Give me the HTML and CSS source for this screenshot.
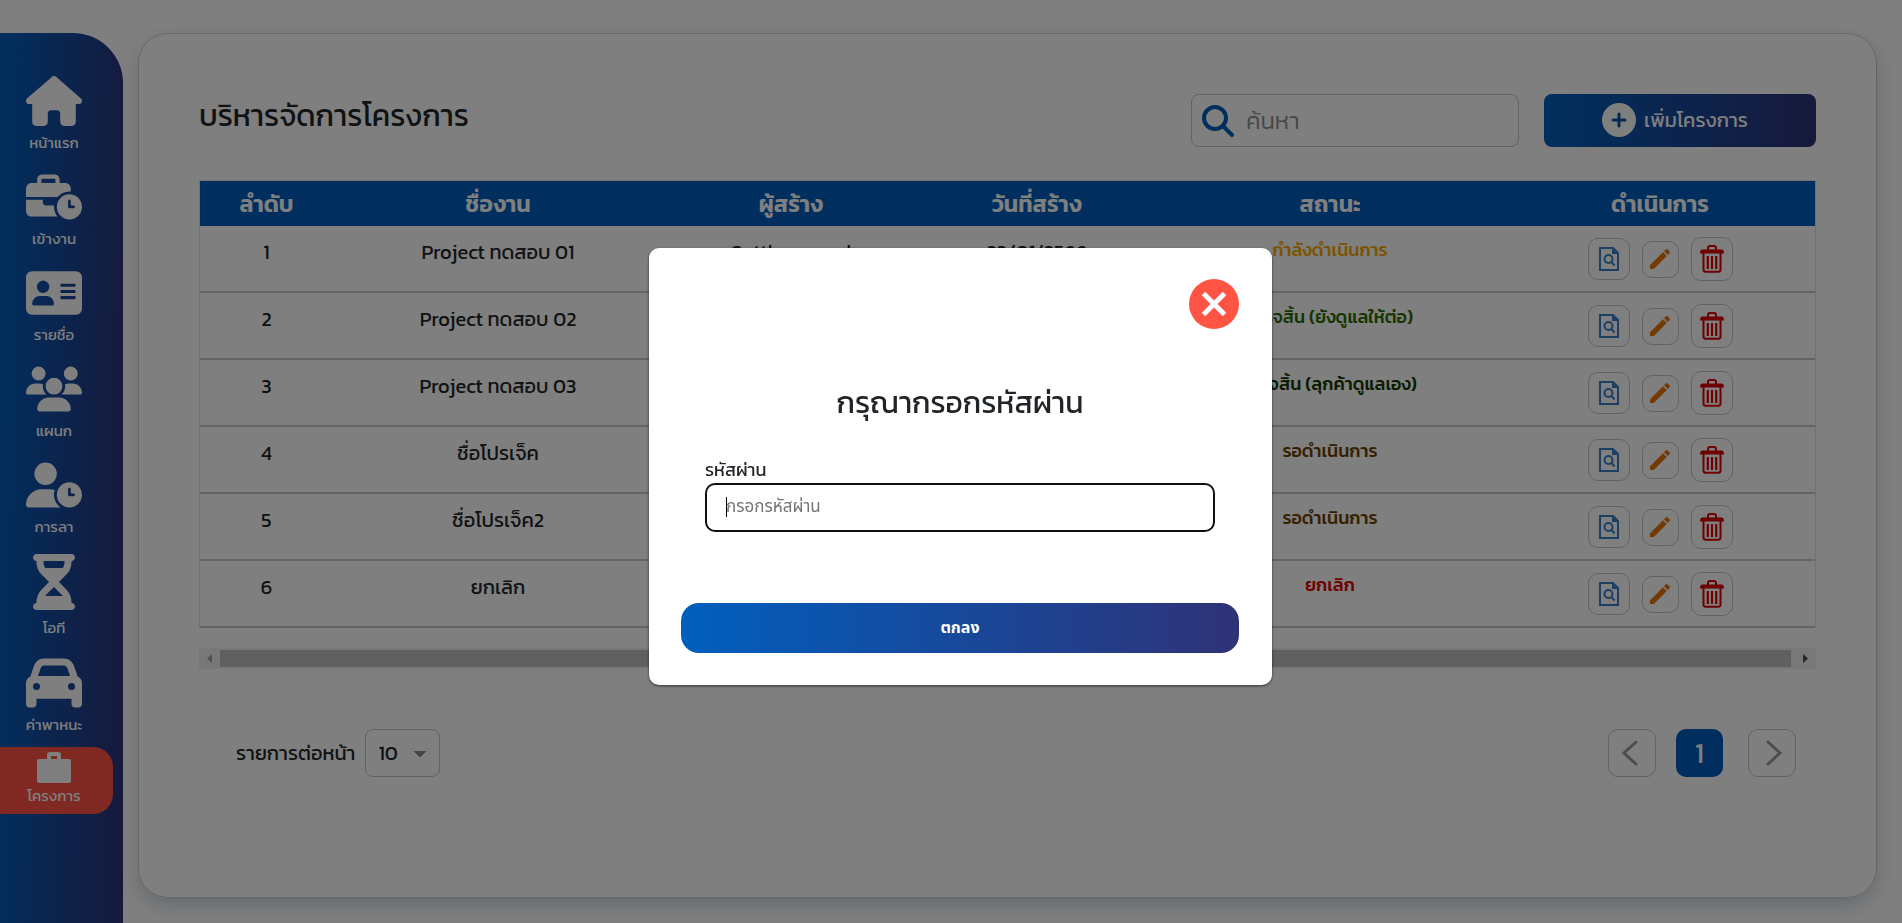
FILE: index.html
```html
<!DOCTYPE html>
<html lang="th">
<head>
<meta charset="utf-8">
<title>บริหารจัดการโครงการ</title>
<link rel="stylesheet" href="styles.css">
</head>
<body>
<svg class="sprite" aria-hidden="true">
  <symbol id="i-view" viewBox="0 0 20 24"><path d="M1 1h13l5 5v17H1z" fill="none" stroke="#3a80c4" stroke-width="2"/><path d="M13 1v6h6z" fill="#3a80c4"/><circle cx="9.500" cy="12" r="4" fill="none" stroke="#3a80c4" stroke-width="2"/><path d="M12.500 15l3 3.500" stroke="#3a80c4" stroke-width="2"/></symbol>
  <symbol id="i-edit" viewBox="0 0 20 20"><path d="M0 20v-3.800L13 3.200 16.800 7 3.800 20zM14 2.200 15.700.6q1-1 2 0l1.700 1.700q1 1 0 2L17.800 6z" fill="#e87408"/></symbol>
  <symbol id="i-trash" viewBox="0 0 24 28"><path d="M8 5V3q0-2 2-2h4q2 0 2 2v2M3.500 8v16.500q0 2.300 2.300 2.300h12.400q2.300 0 2.300-2.300V8" fill="none" stroke="#dc0000" stroke-width="2"/><path d="M0 8.500Q0 4.500 2.500 4.500h19Q24 4.500 24 8.500z" fill="#dc0000"/><path d="M7.800 11v13M12 11v13M16.200 11v13" stroke="#dc0000" stroke-width="2.200"/></symbol>
</svg>

<nav class="sidebar" aria-label="เมนูหลัก">
  <a class="nav-item" href="#"><svg viewBox="0 0 576 512" class="nav-icon"><path d="M575.8 255.500c0 18-15 32.100-32 32.100h-32l.7 160.200c0 2.700-.2 5.400-.5 8.100V472c0 22.100-17.900 40-40 40H392c-22.100 0-40-17.900-40-40v-88c0-17.700-14.300-32-32-32h-64c-17.700 0-32 14.300-32 32v88c0 22.100-17.900 40-40 40h-80c-22.100 0-40-17.900-40-40V287.600H32c-18 0-32-14-32-32.100 0-9 3-17 10-24L266.400 8c7-7 15-8 22-8s15 2 21 7l255.400 224.500c8 7 12 15 11 24z"/></svg><span>หน้าแรก</span></a>
  <a class="nav-item" href="#"><svg viewBox="0 0 640 512" class="nav-icon"><path d="M184 48h144c4.400 0 8 3.600 8 8v40H176V56c0-4.400 3.600-8 8-8zm-56 8v40H64C28.700 96 0 124.700 0 160v96h360.200c32.300-39.100 81.100-64 135.800-64 5.400 0 10.700.2 16 .7V160c0-35.300-28.700-64-64-64h-64V56c0-30.900-25.100-56-56-56H184c-30.900 0-56 25.100-56 56zm192.700 296H224c-17.700 0-32-14.300-32-32v-32H0v128c0 35.300 28.700 64 64 64h296.200C335.100 449.600 320 410.500 320 368c0-5.400.2-10.700.7-16zM640 368a144 144 0 1 0-288 0 144 144 0 1 0 288 0zM496 288c8.800 0 16 7.200 16 16v48h32c8.800 0 16 7.200 16 16s-7.200 16-16 16h-48c-8.800 0-16-7.200-16-16v-64c0-8.800 7.200-16 16-16z"/></svg><span>เข้างาน</span></a>
  <a class="nav-item" href="#"><svg viewBox="0 0 576 512" class="nav-icon"><path d="M64 32C28.700 32 0 60.700 0 96v320c0 35.300 28.700 64 64 64h448c35.300 0 64-28.700 64-64V96c0-35.300-28.700-64-64-64H64zm80 256h64c44.200 0 80 35.800 80 80 0 8.800-7.200 16-16 16H80c-8.800 0-16-7.200-16-16 0-44.200 35.800-80 80-80zm-32-96a64 64 0 1 1 128 0 64 64 0 1 1-128 0zm256-32h128c8.800 0 16 7.200 16 16s-7.200 16-16 16H368c-8.800 0-16-7.200-16-16s7.200-16 16-16zm0 64h128c8.800 0 16 7.200 16 16s-7.200 16-16 16H368c-8.800 0-16-7.200-16-16s7.200-16 16-16zm0 64h128c8.800 0 16 7.200 16 16s-7.200 16-16 16H368c-8.800 0-16-7.200-16-16s7.200-16 16-16z"/></svg><span>รายชื่อ</span></a>
  <a class="nav-item" href="#"><svg viewBox="0 0 640 512" class="nav-icon"><path d="M144 0a80 80 0 1 1 0 160A80 80 0 1 1 144 0zM512 0a80 80 0 1 1 0 160A80 80 0 1 1 512 0zM0 298.700C0 239.800 47.800 192 106.700 192h42.700c15.900 0 31 3.500 44.600 9.700-1.300 7.200-1.900 14.700-1.900 22.300 0 38.200 16.800 72.500 43.300 96H21.300C9.600 320 0 310.400 0 298.700zM404.600 320c26.600-23.500 43.300-57.800 43.300-96 0-7.600-.7-15-1.900-22.300 13.600-6.300 28.700-9.700 44.600-9.700h42.700C592.200 192 640 239.800 640 298.700c0 11.800-9.600 21.300-21.300 21.300zM224 224a96 96 0 1 1 192 0 96 96 0 1 1-192 0zM128 485.300C128 411.700 187.700 352 261.300 352h117.400C452.300 352 512 411.700 512 485.300c0 14.700-11.900 26.700-26.700 26.700H154.700c-14.700 0-26.700-11.900-26.700-26.700z"/></svg><span>แผนก</span></a>
  <a class="nav-item" href="#"><svg viewBox="0 0 640 512" class="nav-icon"><path d="M224 0a128 128 0 1 1 0 256A128 128 0 1 1 224 0zM178.300 304h91.400c20.600 0 40.400 3.500 58.800 9.900C323 331 320 349.100 320 368c0 59.500 29.500 112.100 74.800 144H29.700C13.300 512 0 498.700 0 482.300 0 383.800 79.800 304 178.300 304zM352 368a144 144 0 1 1 288 0 144 144 0 1 1-288 0zm144-80c-8.800 0-16 7.200-16 16v64c0 8.800 7.200 16 16 16h48c8.800 0 16-7.200 16-16s-7.200-16-16-16h-32v-48c0-8.800-7.200-16-16-16z"/></svg><span>การลา</span></a>
  <a class="nav-item nav-hours" href="#"><svg viewBox="0 0 384 512" class="nav-icon"><path d="M32 0C14.300 0 0 14.300 0 32s14.300 32 32 32v11c0 42.400 16.900 83.100 46.900 113.100l67.800 67.900-67.800 67.900C48.900 353.900 32 394.600 32 437v11c-17.700 0-32 14.300-32 32s14.300 32 32 32h320c17.700 0 32-14.300 32-32s-14.300-32-32-32v-11c0-42.400-16.900-83.100-46.900-113.100L237.300 256l67.900-67.900c30-30 46.900-70.700 46.900-113.100V64c17.700 0 32-14.300 32-32s-14.300-32-32-32H32zm64 75V64h192v11c0 19-5.600 37.400-16 53H112c-10.300-15.600-16-34-16-53zm16 309c3.500-5.300 7.600-10.300 12.100-14.900l67.900-67.800 67.900 67.900c4.600 4.600 8.600 9.600 12.100 14.800H112z"/></svg><span>โอที</span></a>
  <a class="nav-item nav-car" href="#"><svg viewBox="0 0 512 512" class="nav-icon"><path d="M135.200 117.400 109.100 192h293.800l-26.100-74.600C372.300 104.600 360.200 96 346.600 96H165.400c-13.600 0-25.700 8.600-30.200 21.400zM39.600 196.800 74.800 96.300C88.300 57.800 124.600 32 165.400 32h181.200c40.800 0 77.100 25.800 90.600 64.300l35.200 100.500c23.200 9.600 39.600 32.500 39.600 59.200v192c0 17.700-14.300 32-32 32h-32c-17.700 0-32-14.300-32-32v-48H96v48c0 17.700-14.300 32-32 32H32c-17.700 0-32-14.300-32-32V256c0-26.700 16.400-49.600 39.600-59.200zM128 288a32 32 0 1 0-64 0 32 32 0 1 0 64 0zm288 32a32 32 0 1 0 0-64 32 32 0 1 0 0 64z"/></svg><span>ค่าพาหนะ</span></a>
  <a class="nav-item nav-active" href="#" aria-current="page"><svg viewBox="0 0 34 32" class="nav-icon-small"><path fill-rule="evenodd" d="M10 7V3q0-3 3-3h8q3 0 3 3v4h8q2 0 2 2v20q0 2-2 2H2q-2 0-2-2V9q0-2 2-2zm4 0h6V4h-6z"/></svg><span>โครงการ</span></a>
</nav>

<main class="card">
  <header class="toolbar">
    <h1>บริหารจัดการโครงการ</h1>
    <label class="search">
      <svg viewBox="0 0 32 32" class="search-icon"><circle cx="13" cy="13" r="11" fill="none" stroke="#005fbe" stroke-width="4"/><path d="M21 21 30 30" stroke="#005fbe" stroke-width="4" stroke-linecap="round"/></svg>
      <input type="text" placeholder="ค้นหา" aria-label="ค้นหา">
    </label>
    <button class="add" type="button"><svg viewBox="0 0 34 34" class="add-icon"><circle cx="17" cy="17" r="17" fill="#fff"/><path d="M17 11v12M11 17h12" stroke="#0f51a5" stroke-width="3" stroke-linecap="round"/></svg>เพิ่มโครงการ</button>
  </header>

  <table>
    <colgroup><col class="c1"><col class="c2"><col class="c3"><col class="c4"><col class="c5"><col class="c6"></colgroup>
    <thead><tr><th>ลำดับ</th><th>ชื่องาน</th><th>ผู้สร้าง</th><th>วันที่สร้าง</th><th>สถานะ</th><th>ดำเนินการ</th></tr></thead>
    <tbody>
      <tr><td>1</td><td>Project ทดสอบ 01</td><td>Sutthapong.d</td><td>23/01/2566</td><td class="status doing">กำลังดำเนินการ</td><td><div class="actions"><button type="button" class="act" aria-label="ดู"><svg class="ic-view"><use href="#i-view"/></svg></button><button type="button" class="act act-edit" aria-label="แก้ไข"><svg class="ic-edit"><use href="#i-edit"/></svg></button><button type="button" class="act act-del" aria-label="ลบ"><svg class="ic-trash"><use href="#i-trash"/></svg></button></div></td></tr>
      <tr><td>2</td><td>Project ทดสอบ 02</td><td></td><td></td><td class="status kept">เสร็จสิ้น (ยังดูแลให้ต่อ)</td><td><div class="actions"><button type="button" class="act" aria-label="ดู"><svg class="ic-view"><use href="#i-view"/></svg></button><button type="button" class="act act-edit" aria-label="แก้ไข"><svg class="ic-edit"><use href="#i-edit"/></svg></button><button type="button" class="act act-del" aria-label="ลบ"><svg class="ic-trash"><use href="#i-trash"/></svg></button></div></td></tr>
      <tr><td>3</td><td>Project ทดสอบ 03</td><td></td><td></td><td class="status done">เสร็จสิ้น (ลุกค้าดูแลเอง)</td><td><div class="actions"><button type="button" class="act" aria-label="ดู"><svg class="ic-view"><use href="#i-view"/></svg></button><button type="button" class="act act-edit" aria-label="แก้ไข"><svg class="ic-edit"><use href="#i-edit"/></svg></button><button type="button" class="act act-del" aria-label="ลบ"><svg class="ic-trash"><use href="#i-trash"/></svg></button></div></td></tr>
      <tr><td>4</td><td>ชื่อโปรเจ็ค</td><td></td><td></td><td class="status wait">รอดำเนินการ</td><td><div class="actions"><button type="button" class="act" aria-label="ดู"><svg class="ic-view"><use href="#i-view"/></svg></button><button type="button" class="act act-edit" aria-label="แก้ไข"><svg class="ic-edit"><use href="#i-edit"/></svg></button><button type="button" class="act act-del" aria-label="ลบ"><svg class="ic-trash"><use href="#i-trash"/></svg></button></div></td></tr>
      <tr><td>5</td><td>ชื่อโปรเจ็ค2</td><td></td><td></td><td class="status wait">รอดำเนินการ</td><td><div class="actions"><button type="button" class="act" aria-label="ดู"><svg class="ic-view"><use href="#i-view"/></svg></button><button type="button" class="act act-edit" aria-label="แก้ไข"><svg class="ic-edit"><use href="#i-edit"/></svg></button><button type="button" class="act act-del" aria-label="ลบ"><svg class="ic-trash"><use href="#i-trash"/></svg></button></div></td></tr>
      <tr><td>6</td><td>ยกเลิก</td><td></td><td></td><td class="status cancel">ยกเลิก</td><td><div class="actions"><button type="button" class="act" aria-label="ดู"><svg class="ic-view"><use href="#i-view"/></svg></button><button type="button" class="act act-edit" aria-label="แก้ไข"><svg class="ic-edit"><use href="#i-edit"/></svg></button><button type="button" class="act act-del" aria-label="ลบ"><svg class="ic-trash"><use href="#i-trash"/></svg></button></div></td></tr>
    </tbody>
  </table>

  <div class="scrollbar">
    <svg viewBox="0 0 21 21" class="scroll-arrow"><path d="M13 6v9l-5-4.500z" fill="#a3a3a3"/></svg>
    <div class="thumb"></div>
    <svg viewBox="0 0 21 21" class="scroll-arrow"><path d="M8 6v9l5-4.500z" fill="#505050"/></svg>
  </div>

  <footer class="pager">
    <label for="per-page">รายการต่อหน้า</label>
    <select id="per-page"><option>10</option><option>20</option></select>
    <button type="button" class="page prev" aria-label="ก่อนหน้า"><svg viewBox="0 0 16 26"><path d="M14 2 2 13l12 11"/></svg></button>
    <button type="button" class="page current">1</button>
    <button type="button" class="page next" aria-label="ถัดไป"><svg viewBox="0 0 16 26"><path d="M2 2l12 11L2 24"/></svg></button>
  </footer>
</main>

<div class="overlay">
  <form class="modal" role="dialog" aria-labelledby="modal-title">
    <button type="button" class="close" aria-label="ปิด"><svg viewBox="0 0 50 50"><circle cx="25" cy="25" r="25" fill="#ff5344"/><path d="M14.500 14.500 35.500 35.500M35.500 14.500 14.500 35.500" stroke="#fff" stroke-width="5"/></svg></button>
    <h2 id="modal-title">กรุณากรอกรหัสผ่าน</h2>
    <div class="field">
      <label for="password">รหัสผ่าน</label>
      <input id="password" type="password" placeholder="กรอกรหัสผ่าน">
    </div>
    <button type="button" class="submit">ตกลง</button>
  </form>
</div>
</body>
</html>
```
FILE: styles.css
```css
* { box-sizing: border-box; }
body {
  margin: 0;
  min-height: 100vh;
  padding: 33px 25px 25px 0;
  display: flex;
  gap: 15px;
  background: #fff;
  color: #212529;
  font-family: Kanit, "Noto Sans Thai", "Noto Sans", sans-serif;
  font-size: 20px;
  overflow: hidden;
}
button, input, select { font: inherit; color: inherit; }
button { cursor: pointer; padding: 0; }
.sprite { display: none; }

.sidebar {
  width: 123px;
  flex: none;
  margin-bottom: -25px;
  padding-top: 40px;
  border-radius: 0 50px 0 0;
  background: linear-gradient(91deg, #005fbe, #2f3277);
  display: flex;
  flex-direction: column;
}
.nav-item {
  width: 108px;
  height: 96px;
  display: flex;
  flex-direction: column;
  align-items: center;
  color: #fff;
  font-size: 15px;
  line-height: 24px;
  text-decoration: none;
}
.nav-item svg { fill: #fff; }
.nav-icon { height: 56px; width: 56px; margin-bottom: 2px; }
.nav-hours { height: 101px; padding-top: 1px; }
.nav-hours .nav-icon { margin-bottom: 6px; }
.nav-car { height: 93px; padding-top: 1px; }
.nav-active {
  width: 113px;
  height: 67px;
  padding: 5px 5px 0 0;
  border-radius: 0 20px 20px 0;
  background: #ff5344;
}
.nav-icon-small { width: 34px; height: 32px; }

.card {
  flex: 1;
  padding: 60px 60px 0;
  border: 1px solid #c8cdd2;
  border-radius: 30px;
  box-shadow: 0 8px 20px rgba(0, 50, 90, .2);
}
.toolbar { display: flex; align-items: flex-start; height: 86px; }
h1 { flex: 1; margin: 0; font-size: 30px; line-height: 44px; font-weight: 400; }
.search {
  width: 328px;
  height: 53px;
  margin-right: 25px;
  padding: 0 10px;
  display: flex;
  align-items: center;
  gap: 10px;
  border: 1px solid #c4c4c4;
  border-radius: 8px;
}
.search-icon { width: 32px; height: 32px; flex: none; }
.search input { border: 0; outline: 0; min-width: 0; flex: 1; background: none; font-size: 24px; font-weight: 300; }
.search input::placeholder { color: #8f8f8f; }
.add {
  width: 272px;
  height: 53px;
  padding: 0 10px 2px 0;
  border: 0;
  border-radius: 8px;
  display: flex;
  align-items: center;
  justify-content: center;
  gap: 8px;
  color: #fff;
  background: linear-gradient(91deg, #005fbe, #2f3277);
}
.add-icon { width: 34px; height: 34px; }

table { width: 100%; table-layout: fixed; border-collapse: separate; border-spacing: 0; border: 1px solid #dee2e6; border-width: 1px 1px 0; text-align: center; }
.c1 { width: 133px; } .c2 { width: 330px; } .c3 { width: 256px; } .c4 { width: 236px; } .c5 { width: 350px; }
th { height: 45px; padding: 0; background: #005fbe; color: #fff; font-size: 23px; line-height: 36px; font-weight: 600; }
td { height: 67px; padding: 10px 0 0; vertical-align: top; line-height: 32px; border-bottom: 2px solid #c9c9c9; }
.status { font-size: 18px; font-weight: 500; line-height: 28px; }
.doing { color: #f5a800; }
.kept { color: #2e6b00; }
.done { color: #123800; }
.wait { color: #6b4300; }
.cancel { color: #e00000; }
.actions { display: flex; justify-content: center; align-items: center; gap: 12px; padding-top: 1px; }
.act { width: 42px; height: 42px; display: grid; place-items: center; border: 1px solid #c4c4c4; border-radius: 10px; background: none; }
.act-edit { width: 37px; height: 37px; }
.act-del { height: 44px; }
.ic-view { width: 20px; height: 24px; }
.ic-edit { width: 20px; height: 20px; }
.ic-trash { width: 24px; height: 28px; }

.scrollbar { margin-top: 20px; height: 21px; display: flex; align-items: center; background: #f1f1f1; }
.scroll-arrow { width: 21px; height: 21px; flex: none; }
.thumb { flex: 1; height: 17px; margin-right: 4px; background: #c1c1c1; }

.pager { margin-top: 60px; padding: 0 20px 0 37px; display: flex; align-items: center; }
.pager select {
  width: 75px;
  height: 48px;
  margin: 0 auto 0 10px;
  padding-left: 12px;
  border: 1px solid #c4c4c4;
  border-radius: 8px;
  appearance: none;
  background: linear-gradient(to bottom right, #8a8a8a 50%, transparent 52%) 54px 21px / 6px 6px no-repeat, linear-gradient(to bottom left, #8a8a8a 50%, transparent 52%) 48px 21px / 6px 6px no-repeat;
}
.page { width: 48px; height: 48px; display: grid; place-items: center; border: 1px solid #c4c4c4; border-radius: 10px; background: none; }
.page svg { width: 16px; height: 26px; fill: none; stroke: #9a9a9a; stroke-width: 3; stroke-linecap: round; }
.prev { padding-right: 4px; }
.next { padding-left: 4px; }
.current { margin: 0 25px 0 20px; width: 47px; border: 0; background: #005fbe; color: #fff; font-size: 28px; }

.overlay {
  position: fixed;
  inset: 0;
  padding: 9px 0 0 19px;
  display: grid;
  place-items: center;
  background: rgba(0, 0, 0, .5);
}
.modal {
  width: 623px;
  padding: 31px 33px 32px 32px;
  border-radius: 10px;
  background: #fff;
  box-shadow: 0 1px 3px rgba(0, 0, 0, .6);
  display: flex;
  flex-direction: column;
}
.close { width: 50px; height: 50px; align-self: flex-end; border: 0; background: none; }
.close svg { display: block; width: 50px; height: 50px; }
h2 { margin: 52px 0 31px; font-size: 30px; line-height: 44px; font-weight: 400; text-align: center; }
.field { padding: 0 24px; display: flex; flex-direction: column; font-size: 18px; }
.field label { line-height: 27px; }
.field input {
  height: 49px;
  padding: 0 19px;
  border: 2px solid #111;
  border-radius: 10px;
  outline: 0;
  background: linear-gradient(#000, #000) 19px 12px / 1px 20px no-repeat;
  font-family: "Noto Sans Thai", "Noto Sans", sans-serif;
  font-size: 17px;
}
.field input::placeholder { color: #757575; }
.submit {
  height: 50px;
  margin-top: 71px;
  border: 0;
  border-radius: 18px;
  background: linear-gradient(91deg, #005fbe, #2f3277);
  color: #fff;
  font-family: "Noto Sans Thai", "Noto Sans", sans-serif;
  font-size: 16px;
  font-weight: 700;
}
```
